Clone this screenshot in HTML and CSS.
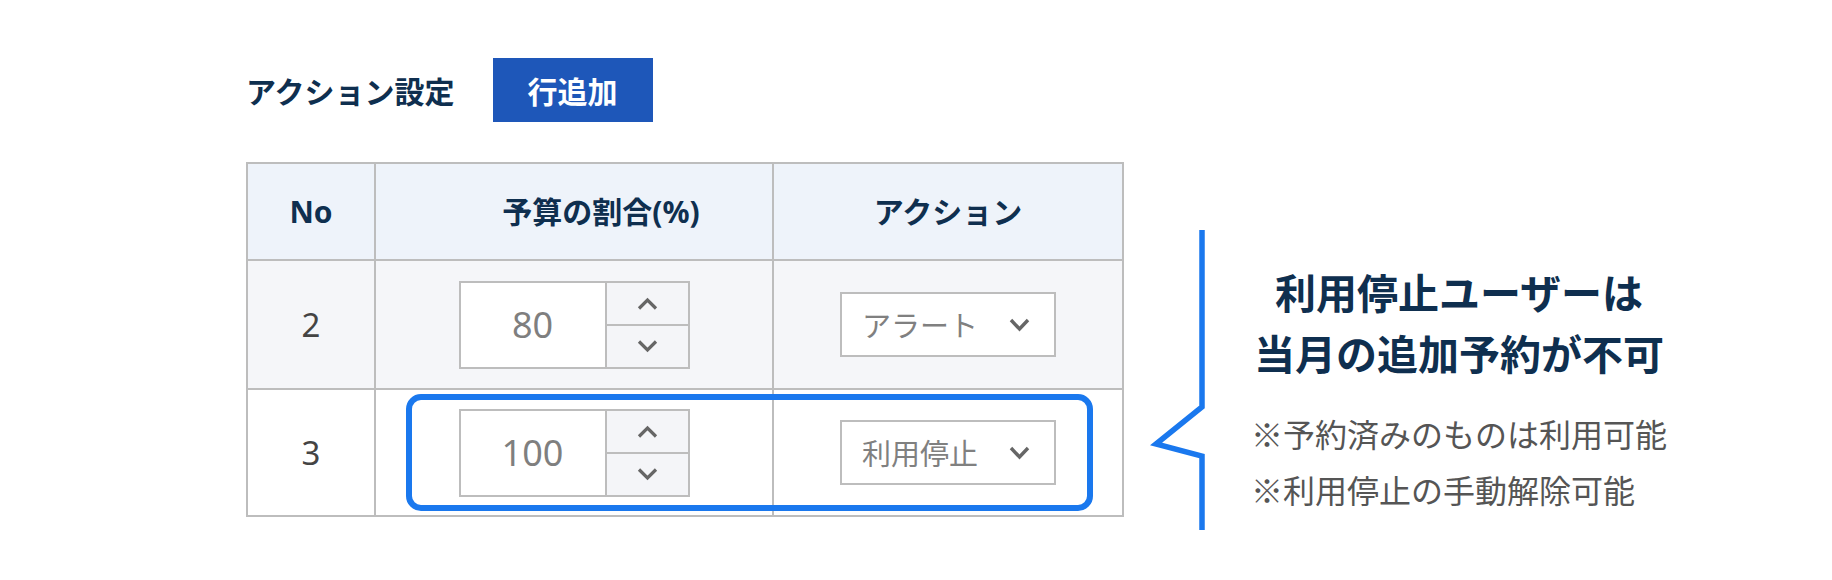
FILE: index.html
```html
<!DOCTYPE html>
<html lang="ja">
<head>
<meta charset="utf-8">
<title>アクション設定</title>
<link rel="stylesheet" href="styles.css">
</head>
<body>
<div class="page">
  <div class="main">
    <div class="toolbar">
      <span class="label">アクション設定</span>
      <button class="add-btn">行追加</button>
    </div>
    <div class="table-wrap">
      <div class="grid">
        <div class="cell th">No</div>
        <div class="cell th th-ratio">予算の割合(%)</div>
        <div class="cell th">アクション</div>

        <div class="cell alt num">2</div>
        <div class="cell alt">
          <div class="spin">
            <div class="spin-val">80</div>
            <div class="spin-btns">
              <div class="spin-btn up"><svg width="21" height="13" viewBox="0 0 21 13"><polyline points="2,11.5 10.5,3 19,11.5" fill="none" stroke="#666" stroke-width="3.2"/></svg></div>
              <div class="spin-btn"><svg width="21" height="13" viewBox="0 0 21 13"><polyline points="2,1.5 10.5,10 19,1.5" fill="none" stroke="#666" stroke-width="3.2"/></svg></div>
            </div>
          </div>
        </div>
        <div class="cell alt">
          <div class="select"><span>アラート</span><svg width="21" height="14" viewBox="0 0 21 14"><polyline points="2,2 10.5,11 19,2" fill="none" stroke="#666" stroke-width="3.4"/></svg></div>
        </div>

        <div class="cell num">3</div>
        <div class="cell">
          <div class="spin">
            <div class="spin-val">100</div>
            <div class="spin-btns">
              <div class="spin-btn up"><svg width="21" height="13" viewBox="0 0 21 13"><polyline points="2,11.5 10.5,3 19,11.5" fill="none" stroke="#666" stroke-width="3.2"/></svg></div>
              <div class="spin-btn"><svg width="21" height="13" viewBox="0 0 21 13"><polyline points="2,1.5 10.5,10 19,1.5" fill="none" stroke="#666" stroke-width="3.2"/></svg></div>
            </div>
          </div>
        </div>
        <div class="cell">
          <div class="select"><span>利用停止</span><svg width="21" height="14" viewBox="0 0 21 14"><polyline points="2,2 10.5,11 19,2" fill="none" stroke="#666" stroke-width="3.4"/></svg></div>
        </div>
      </div>
      <div class="highlight"></div>
    </div>
  </div>

  <div class="callout">
    <svg class="bracket" width="58" height="300" viewBox="0 0 58 300">
      <path d="M52,0 V177 L6,214 L52,226 V300" fill="none" stroke="#1a78ee" stroke-width="5.5" stroke-linejoin="miter"/>
    </svg>
    <div class="note">
      <div class="note-title">利用停止ユーザーは<br>当月の追加予約が不可</div>
      <div class="note-sub">※予約済みのものは利用可能<br>※利用停止の手動解除可能</div>
    </div>
  </div>
</div>
</body>
</html>
```

FILE: styles.css
```css
* { box-sizing: border-box; }

html, body {
  margin: 0;
  background: #ffffff;
}

body {
  font-family: "Noto Sans", "Noto Sans CJK JP", sans-serif;
  color: #0f2f4f;
}

.page {
  display: flex;
  align-items: flex-start;
  padding: 58px 0 0 246px;
}

.main {
  display: flex;
  flex-direction: column;
}

.toolbar {
  display: flex;
  align-items: center;
  height: 64px;
}

.label {
  font-family: "Noto Sans CJK JP", sans-serif;
  font-size: 30px;
  font-weight: 700;
  line-height: 1;
  color: #0f2f4f;
}

.add-btn {
  margin-left: 38px;
  width: 160px;
  height: 64px;
  border: 0;
  padding: 0;
  background: #1e57b9;
  color: #ffffff;
  font-family: "Noto Sans CJK JP", sans-serif;
  font-size: 30px;
  font-weight: 700;
  line-height: 1;
}

.table-wrap {
  position: relative;
  margin-top: 40px;
}

.grid {
  display: grid;
  grid-template-columns: 128px 398px 350px;
  grid-template-rows: 97px 129px 127px;
  border-top: 2px solid #bdbdbd;
  border-left: 2px solid #bdbdbd;
}

.cell {
  border-right: 2px solid #bdbdbd;
  border-bottom: 2px solid #bdbdbd;
  display: flex;
  align-items: center;
  justify-content: center;
  background: #ffffff;
}

.th {
  background: #eef3fa;
  font-size: 30px;
  font-weight: 700;
  color: #0f2f4f;
  line-height: 1;
}

.th-ratio {
  padding-left: 54px;
}

.alt {
  background: #f5f6f9;
}

.num {
  font-size: 33px;
  color: #444444;
  line-height: 1;
}

.spin {
  display: flex;
  width: 231px;
  height: 88px;
  border: 2px solid #bdbdbd;
  background: #ffffff;
}

.spin-val {
  width: 146px;
  border-right: 2px solid #bdbdbd;
  display: flex;
  align-items: center;
  justify-content: center;
  font-size: 36px;
  color: #7f7f7f;
  line-height: 1;
  background: #ffffff;
}

.spin-btns {
  flex: 1;
  display: flex;
  flex-direction: column;
}

.spin-btn {
  flex: 1;
  display: flex;
  align-items: center;
  justify-content: center;
  background: #f4f5f8;
}

.spin-btn.up {
  border-bottom: 2px solid #bdbdbd;
}

.select {
  width: 216px;
  height: 65px;
  border: 2px solid #bdbdbd;
  background: #ffffff;
  display: flex;
  align-items: center;
  justify-content: space-between;
  padding: 0 24px 0 20px;
  font-family: "Noto Sans CJK JP", sans-serif;
  font-size: 29px;
  color: #808080;
  line-height: 1;
}

.highlight {
  position: absolute;
  left: 160px;
  top: 232px;
  width: 687px;
  height: 117px;
  border: 6px solid #1a78ee;
  border-radius: 15px;
}

.callout {
  display: flex;
  align-items: flex-start;
  margin-left: 26px;
  margin-top: 172px;
}

.bracket {
  display: block;
  flex: none;
}

.note {
  margin-left: 43px;
  margin-top: 31px;
  font-family: "Noto Sans CJK JP", sans-serif;
}

.note-title {
  text-align: center;
  font-size: 41px;
  font-weight: 700;
  line-height: 61px;
  color: #0f2f4f;
}

.note-sub {
  margin-top: 23px;
  font-size: 32px;
  line-height: 55.5px;
  color: #555555;
  white-space: nowrap;
}
```
